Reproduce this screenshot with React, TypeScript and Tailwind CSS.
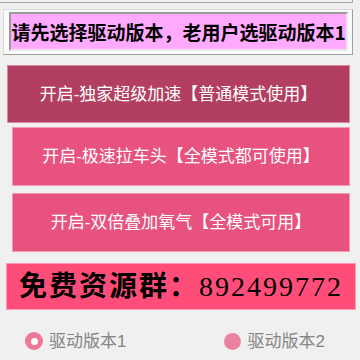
import React from "react";

export default function App() {
  const cjk = { fontFamily: '"Noto Sans CJK SC", "Noto Sans", sans-serif' };
  const sans = { fontFamily: '"Liberation Sans", "Noto Sans CJK SC", sans-serif' };
  return (
    <div className="w-[360px] h-[360px] bg-[#f0f0f0] overflow-hidden flex flex-col" style={cjk}>
      <div className="h-[3px] w-[353px] border-b border-r border-[#a8a8a8]" />
      <div className="mt-[6px] ml-[3px] w-[350px] h-[46px] border border-t-[#d8d8d8] border-l-[#d8d8d8] border-b-[#a0a0a0] border-r-[#a0a0a0] bg-[#fafafa] pl-[5px] pr-[4px] pt-[2px] pb-[3px] flex">
        <div className="flex-1 border-2 border-t-[#9a9a9a] border-l-[#9a9a9a] border-b-[#e8e8e8] border-r-[#e8e8e8] bg-[#ffaaff] flex items-center justify-center">
          <span className="text-[19px] font-bold text-black leading-none whitespace-nowrap">请先选择驱动版本，老用户选驱动版本1</span>
        </div>
      </div>
      <div className="mt-[10px] ml-[7px] w-[343px] h-[58px] bg-[#b23f61] border border-[#d98aa0] flex items-center justify-center">
        <span className="text-[17px] text-white leading-none whitespace-nowrap" style={sans}>开启-独家超级加速【普通模式使用】</span>
      </div>
      <div className="mt-[4px] ml-[12px] w-[338px] h-[59px] bg-[#e7527f] border border-[#f59ab5] flex items-center justify-center">
        <span className="text-[17px] text-white leading-none whitespace-nowrap" style={sans}>开启-极速拉车头【全模式都可使用】</span>
      </div>
      <div className="mt-[7px] ml-[12px] w-[338px] h-[59px] bg-[#e7527f] border border-[#f59ab5] flex items-center justify-center">
        <span className="text-[17px] text-white leading-none whitespace-nowrap" style={sans}>开启-双倍叠加氧气【全模式可用】</span>
      </div>
      <div className="mt-[11px] ml-[6px] w-[350px] h-[47px] bg-[#ff4d7a] border border-[#ff9ab4] flex items-center justify-center">
        <span
          className="text-[28px] text-black leading-none whitespace-nowrap tracking-[2px]"
          style={{ fontFamily: '"Liberation Serif", "Noto Sans CJK SC", serif' }}
        >
          <span className="font-bold">免费资源群：</span>
          <span className="font-normal">892499772</span>
        </span>
      </div>
      <div className="mt-[22px] h-[18px] flex items-center" style={sans}>
        <div className="ml-[25px] w-[18px] h-[18px] rounded-full bg-[#ef7896] flex items-center justify-center">
          <div className="w-[7px] h-[7px] rounded-full bg-white" />
        </div>
        <span className="ml-[6px] text-[17px] text-[#858585] leading-none whitespace-nowrap">驱动版本1</span>
        <div className="ml-[98px] w-[17px] h-[17px] rounded-full bg-[#e9829f]" />
        <span className="ml-[6px] text-[17px] text-[#858585] leading-none whitespace-nowrap">驱动版本2</span>
      </div>
    </div>
  );
}
